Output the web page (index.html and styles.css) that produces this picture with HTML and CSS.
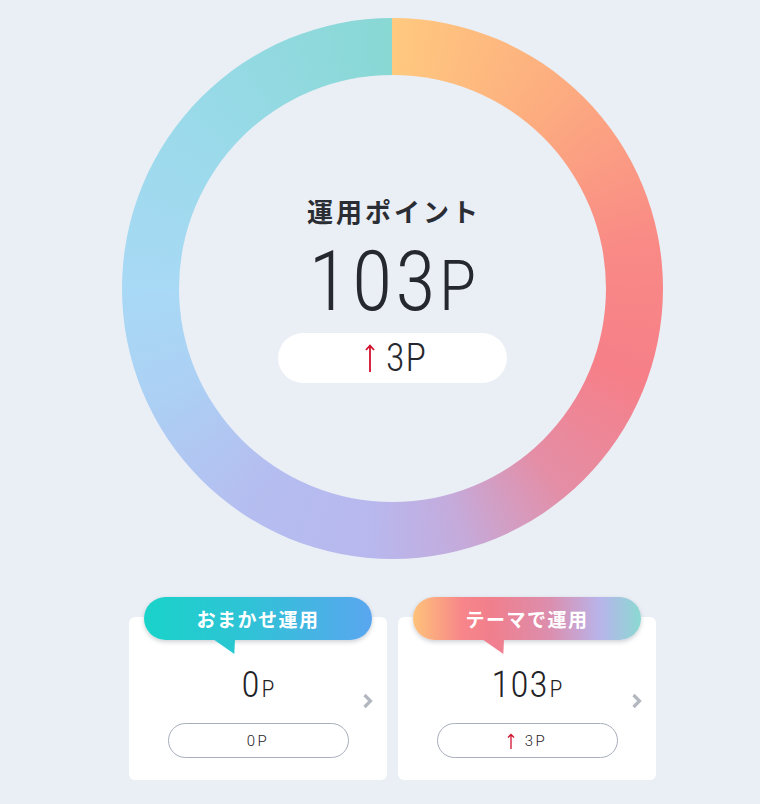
FILE: index.html
```html
<!DOCTYPE html>
<html lang="ja">
<head>
<meta charset="utf-8">
<title>運用ポイント</title>
<link rel="stylesheet" href="styles.css">
</head>
<body>
<div class="page">
  <div class="ring">
    <div class="ring-inner">
      <div class="title">運用ポイント</div>
      <div class="total"><span class="total-num">103</span><span class="total-unit">P</span></div>
      <div class="delta">
        <svg class="delta-arrow" width="10" height="28" viewBox="0 0 10 28"><path d="M5 1.5V28M1 6L5 1.5L9 6" fill="none" stroke="#d3102e" stroke-width="1.8"/></svg>
        <span class="delta-text">3P</span>
      </div>
    </div>
  </div>
  <div class="cards">
    <div class="card">
      <div class="bubble bubble-omakase">おまかせ運用</div>
      <div class="amount"><span class="amount-num">0</span><span class="amount-unit">P</span></div>
      <div class="mini"><span class="mini-text">0P</span></div>
      <svg class="chevron" width="12" height="16" viewBox="0 0 12 16"><path d="M2.5 2L8.5 8L2.5 14" fill="none" stroke="#b3b7bf" stroke-width="3.2"/></svg>
    </div>
    <div class="card">
      <div class="bubble bubble-theme">テーマで運用</div>
      <div class="amount"><span class="amount-num">103</span><span class="amount-unit">P</span></div>
      <div class="mini">
        <svg class="mini-arrow" width="8" height="16" viewBox="0 0 8 16"><path d="M4 1.5V16M1 4.5L4 1.5L7 4.5" fill="none" stroke="#d3102e" stroke-width="1.3"/></svg>
        <span class="mini-text">3P</span>
      </div>
      <svg class="chevron" width="12" height="16" viewBox="0 0 12 16"><path d="M2.5 2L8.5 8L2.5 14" fill="none" stroke="#b3b7bf" stroke-width="3.2"/></svg>
    </div>
  </div>
</div>
</body>
</html>
```

FILE: styles.css
```css
* { box-sizing: border-box; }
html, body { margin: 0; padding: 0; }
body {
  background: #eaeef5;
  font-family: "Noto Sans CJK JP", "Noto Sans", sans-serif;
  color: #25282e;
}
.page {
  width: 760px;
  padding-left: 25px;
  display: flex;
  flex-direction: column;
  align-items: center;
}
.ring {
  margin-top: 18px;
  width: 541px;
  height: 541px;
  border-radius: 50%;
  padding: 57px;
  background: conic-gradient(from 0deg,
    #ffc97f 0deg,
    #fdb07f 35deg,
    #f98a86 80deg,
    #f67f88 110deg,
    #e48ea6 140deg,
    #c4abdc 165deg,
    #b8b8ee 185deg,
    #b5bef0 215deg,
    #acd0f4 245deg,
    #a8d9f5 270deg,
    #98dae8 315deg,
    #88d8d4 360deg);
}
.ring-inner {
  width: 427px;
  height: 427px;
  border-radius: 50%;
  background: #eaeef5;
  display: flex;
  flex-direction: column;
  align-items: center;
  padding-top: 123px;
}
.title {
  font-size: 26px;
  line-height: 26px;
  font-weight: 700;
  letter-spacing: 3px;
  padding-left: 3px;
  color: #2a2d33;
}
.total {
  margin-top: 17px;
  height: 82px;
  line-height: 82px;
  font-family: Roboto, "Liberation Sans", sans-serif;
  font-weight: 300;
  font-stretch: 80%;
  color: #25282e;
  white-space: nowrap;
}
.total-num { font-size: 83px; letter-spacing: 3px; }
.total-unit { font-size: 70px; }
.delta {
  margin-top: 10px;
  width: 229px;
  height: 50px;
  border-radius: 25px;
  background: #ffffff;
  display: flex;
  align-items: center;
  justify-content: center;
  gap: 11px;
  padding-left: 7px;
}
.delta-arrow { display: block; }
.delta-text {
  font-family: Roboto, "Liberation Sans", sans-serif;
  font-weight: 300;
  font-stretch: 80%;
  font-size: 38px;
  line-height: 38px;
  letter-spacing: 1px;
  color: #25282e;
}
.cards {
  margin-top: 58px;
  display: flex;
  gap: 11px;
}
.card {
  position: relative;
  width: 258px;
  height: 163px;
  background: #ffffff;
  border-radius: 6px;
  display: flex;
  flex-direction: column;
  align-items: center;
  padding-top: 48px;
}
.bubble {
  position: absolute;
  left: 15px;
  top: -20px;
  width: 228px;
  height: 43px;
  border-radius: 22px;
  color: #ffffff;
  font-size: 19px;
  font-weight: 700;
  letter-spacing: 1.5px;
  line-height: 43px;
  text-align: center;
  box-shadow: 0 2px 4px rgba(60, 70, 90, 0.25);
}
.bubble::after {
  content: "";
  position: absolute;
  left: 69px;
  top: 42px;
  width: 22px;
  height: 15px;
  clip-path: polygon(0 0, 100% 0, 97% 100%);
}
.bubble-omakase {
  background: linear-gradient(90deg, #19d3c9 0%, #2fc3d6 45%, #5aa6ef 100%);
}
.bubble-omakase::after { background: #27c8d0; }
.bubble-theme {
  background: linear-gradient(90deg, #fec27a 0%, #f7858a 22%, #f07f8d 35%, #dc8eae 60%, #b8b4ea 82%, #8bd9d2 100%);
}
.bubble-theme::after { background: #f08090; }
.amount {
  height: 40px;
  line-height: 40px;
  font-family: Roboto, "Liberation Sans", sans-serif;
  font-weight: 300;
  font-stretch: 80%;
  color: #1f2226;
  white-space: nowrap;
}
.amount-num { font-size: 37px; letter-spacing: 1px; }
.amount-unit { font-size: 24px; margin-left: 1px; }
.mini {
  margin-top: 18px;
  width: 181px;
  height: 35px;
  border: 1.5px solid #a8aebb;
  border-radius: 18px;
  display: flex;
  align-items: center;
  justify-content: center;
  gap: 10px;
}
.mini-arrow { display: block; }
.mini-text {
  font-family: Roboto, "Liberation Sans", sans-serif;
  font-weight: 300;
  font-size: 15px;
  letter-spacing: 2.5px;
  color: #1f2226;
}
.chevron {
  position: absolute;
  right: 13px;
  top: 76px;
}
```
